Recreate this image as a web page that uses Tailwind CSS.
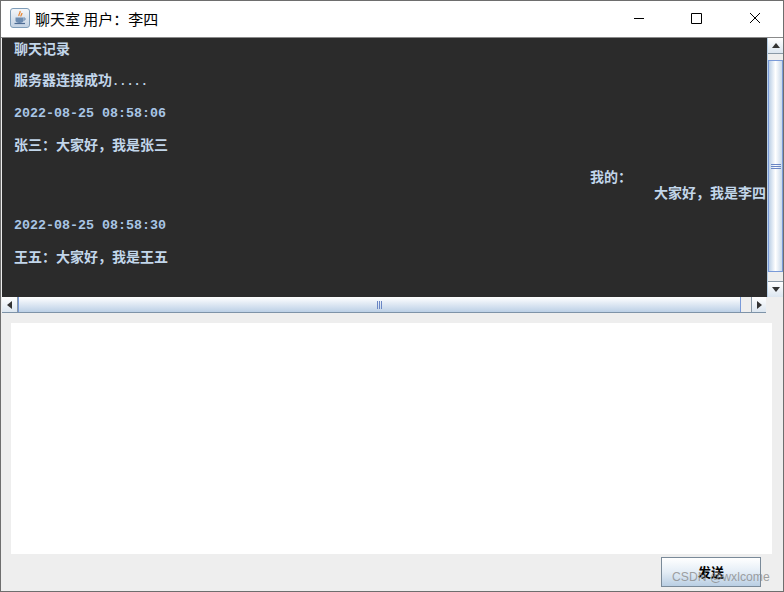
<!DOCTYPE html>
<html lang="zh-CN">
<head>
<meta charset="UTF-8">
<title>聊天室</title>
<script src="https://cdn.jsdelivr.net/npm/@tailwindcss/browser@4"></script>
</head>
<body class="m-0 overflow-hidden bg-[#eeeeee]">
<div class="relative w-[784px] h-[592px] flex flex-col border border-[#6e6e6e] bg-[#eeeeee] font-['Noto_Sans_CJK_SC',sans-serif]">

  <!-- title bar -->
  <div class="h-[37px] shrink-0 flex items-center pb-[2px] bg-white border-b border-[#8a8a8a]">
    <div class="ml-[9px] w-[20px] h-[20px] rounded-[3px] border border-[#7f9db9] bg-gradient-to-b from-[#f4f6f9] to-[#c3d2e3] flex items-center justify-center">
      <svg width="16" height="16" viewBox="0 0 16 16" fill="none">
        <path d="M8 1c1 2-2 3-1 5M10 3c0 1.500-1.500 2-1 3.500" stroke="#e8812a" stroke-width="1.200"/>
        <path d="M3.500 7.500h8v3c0 1.500-1.500 2.500-4 2.500s-4-1-4-2.500z" fill="#6c8bb0"/>
        <path d="M11.500 8h1.500v2h-1.500" stroke="#6c8bb0"/>
        <path d="M2.500 13.500h10.500" stroke="#4d6c94" stroke-width="1.200"/>
      </svg>
    </div>
    <span class="ml-[5px] text-[15px] leading-none text-black">聊天室 用户：李四</span>
    <div class="ml-auto flex items-center">
      <svg class="mr-[46px]" width="12" height="12" viewBox="0 0 12 12" fill="none"><path d="M1 6.500h10" stroke="#000"/></svg>
      <svg class="mr-[47px]" width="11" height="11" viewBox="0 0 11 11" fill="none"><path d="M.5.500h10v10H.5z" stroke="#000"/></svg>
      <svg class="mr-[22px]" width="12" height="12" viewBox="0 0 12 12" fill="none"><path d="M1 1l10 10M11 1L1 11" stroke="#000"/></svg>
    </div>
  </div>

  <!-- chat area -->
  <div class="ml-px mr-px flex h-[259px] shrink-0">
    <div class="w-[765px] shrink-0 bg-[#2b2b2b] pt-[2px] font-bold text-[14px] leading-[16px] text-[#c2d6ea] overflow-hidden">
      <p class="pl-[12px] mb-[15px]">聊天记录</p>
      <p class="pl-[12px] mb-[18px]">服务器连接成功<span class="font-['Liberation_Mono',monospace] text-[12px] leading-none">.....</span></p>
      <p class="pl-[12px] mb-[14px] font-['Liberation_Mono',monospace] text-[13.33px] text-[#a9c6e6]">2022-08-25 08:58:06</p>
      <p class="pl-[12px] mb-4">张三：大家好，我是张三</p>
      <p class="text-right pr-[135px]">我的：</p>
      <p class="text-right pr-px mb-[18px]">大家好，我是李四</p>
      <p class="pl-[12px] mb-[14px] font-['Liberation_Mono',monospace] text-[13.33px] text-[#a9c6e6]">2022-08-25 08:58:30</p>
      <p class="pl-[12px]">王五：大家好，我是王五</p>
    </div>
    <!-- vertical scrollbar -->
    <div class="w-[16px] shrink-0 flex flex-col bg-[#eeeeee] border-l border-[#b8cfe5]">
      <div class="h-[16px] shrink-0 flex items-center justify-center border-b border-[#8a99a6] bg-gradient-to-b from-white to-[#dce6f0]">
        <svg width="8" height="5" viewBox="0 0 8 5"><path d="M4 0l4 5H0z" fill="#333"/></svg>
      </div>
      <div class="h-[6px] shrink-0"></div>
      <div class="h-[212px] shrink-0 flex flex-col gap-px items-center justify-center border border-[#7a9ad8] bg-gradient-to-r from-[#bcd0e6] via-white to-[#c9d9ea]">
        <div class="w-[10px] h-px bg-[#6a86c4]"></div>
        <div class="w-[10px] h-px bg-[#6a86c4]"></div>
        <div class="w-[10px] h-px bg-[#6a86c4]"></div>
      </div>
      <div class="flex-1"></div>
      <div class="h-[16px] shrink-0 flex items-center justify-center border-t border-[#8a99a6] bg-gradient-to-b from-white to-[#dce6f0]">
        <svg width="8" height="5" viewBox="0 0 8 5"><path d="M0 0h8L4 5z" fill="#333"/></svg>
      </div>
    </div>
  </div>

  <!-- horizontal scrollbar -->
  <div class="ml-px mr-px flex h-[16px] shrink-0">
    <div class="w-[765px] flex border-b border-[#7e93a8]">
      <div class="w-[16px] shrink-0 flex items-center justify-center bg-gradient-to-b from-white to-[#dce6f0] border-r border-[#8a99a6]">
        <svg width="5" height="8" viewBox="0 0 5 8"><path d="M5 0v8L0 4z" fill="#333"/></svg>
      </div>
      <div class="w-[723px] shrink-0 flex gap-px items-center justify-center border-x border-[#7a9ad8] bg-gradient-to-b from-white to-[#bcd0e6]">
        <div class="w-px h-[8px] bg-[#6a86c4]"></div>
        <div class="w-px h-[8px] bg-[#6a86c4]"></div>
        <div class="w-px h-[8px] bg-[#6a86c4]"></div>
      </div>
      <div class="w-[10px] shrink-0"></div>
      <div class="flex-1 flex items-center justify-center bg-gradient-to-b from-white to-[#dce6f0] border-l border-[#8a99a6]">
        <svg width="5" height="8" viewBox="0 0 5 8"><path d="M0 0l5 4-5 4z" fill="#333"/></svg>
      </div>
    </div>
    <div class="w-[16px] bg-[#eeeeee]"></div>
  </div>

  <!-- input -->
  <div class="ml-[10px] mt-[10px] w-[761px] h-[231px] shrink-0 bg-white"></div>

  <!-- send button -->
  <div class="flex justify-end pr-[22px] pt-[3px]">
    <button class="w-[100px] h-[30px] border border-[#7a8a99] bg-gradient-to-b from-white via-[#e4edf6] to-[#b9cee3] text-[13px] font-bold text-black">发送</button>
  </div>

  <div class="absolute left-[671px] top-[568px] text-[12.2px] leading-4 text-[#8a8a8a]/80 font-['Liberation_Sans',sans-serif]">CSDN @wxlcome</div>
</div>
</body>
</html>
